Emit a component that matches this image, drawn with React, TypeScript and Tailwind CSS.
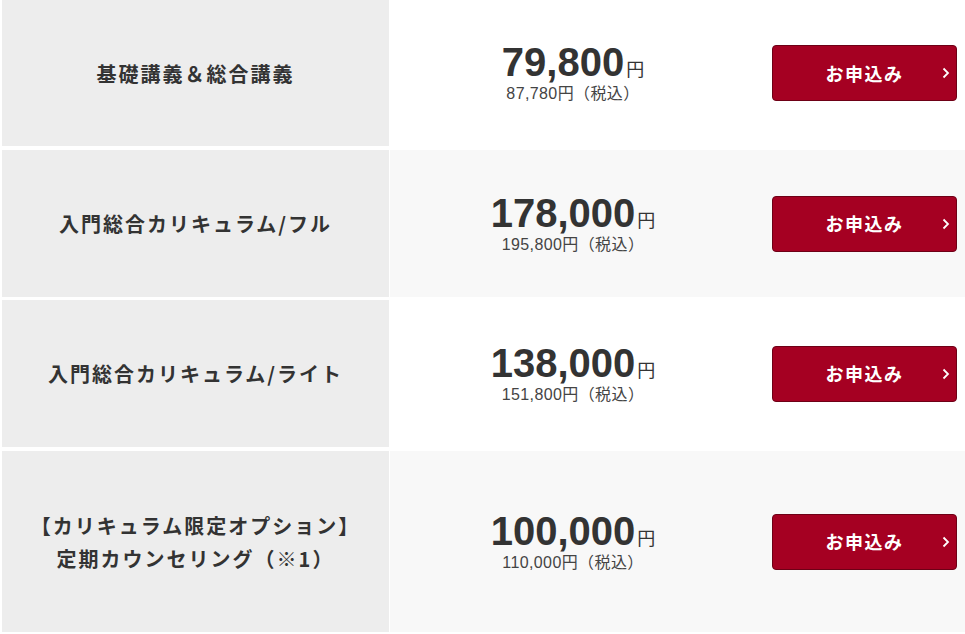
import React from "react";

type Row = {
  label: string[];
  price: string;
  tax: string;
  h: string;
  bg: string;
  mt: string;
};

const rows: Row[] = [
  { label: ["基礎講義＆総合講義"], price: "79,800", tax: "87,780円（税込）", h: "h-[146px]", bg: "bg-white", mt: "mt-0" },
  { label: ["入門総合カリキュラム/フル"], price: "178,000", tax: "195,800円（税込）", h: "h-[147px]", bg: "bg-[#f8f8f8]", mt: "mt-[4px]" },
  { label: ["入門総合カリキュラム/ライト"], price: "138,000", tax: "151,800円（税込）", h: "h-[147px]", bg: "bg-white", mt: "mt-[3px]" },
  { label: ["【カリキュラム限定オプション】", "定期カウンセリング（※1）"], price: "100,000", tax: "110,000円（税込）", h: "h-[181px]", bg: "bg-[#f8f8f8]", mt: "mt-[4px]" },
];

function Chevron() {
  return (
    <svg width="8" height="12" viewBox="0 0 8 12" className="absolute right-[6px] top-1/2 -translate-y-1/2">
      <polyline points="1.5,1.5 6,6 1.5,10.5" fill="none" stroke="white" strokeWidth="1.8" />
    </svg>
  );
}

export default function App() {
  return (
    <div
      className="w-[965px] h-[634px] overflow-hidden bg-white flex flex-col"
      style={{ fontFamily: '"Liberation Sans", "Noto Sans CJK JP", sans-serif' }}
    >
      {rows.map((r, i) => (
        <div key={i} className={`flex ${r.h} ${r.mt} shrink-0`}>
          <div className="ml-[2px] w-[387px] bg-[#ededed] flex flex-col items-center justify-center">
            {r.label.map((l, j) => (
              <div
                key={j}
                className="text-[20px] leading-[33px] font-bold text-[#333] tracking-[2px]"
                style={{ fontFamily: '"Noto Sans CJK JP", sans-serif' }}
              >
                {l}
              </div>
            ))}
          </div>
          <div className={`ml-[1px] flex-1 ${r.bg} flex items-center`}>
            <div className="w-[366px] flex flex-col items-center">
              <div className="flex items-baseline leading-none text-[#333]">
                <span className="text-[40px] font-bold leading-none">{r.price}</span>
                <span className="text-[18px] leading-none ml-[2px]" style={{ fontFamily: '"Noto Sans CJK JP", sans-serif' }}>円</span>
              </div>
              <div className="text-[16px] leading-[20px] text-[#444] mt-[2px] tracking-[0.4px]">{r.tax}</div>
            </div>
            <div className="relative ml-[16px] w-[185px] h-[56px] rounded-[4px] bg-[#a50022] border border-[#6e0016] flex items-center justify-center">
              <span
                className="text-white text-[18px] font-bold tracking-[1.5px]"
                style={{ fontFamily: '"Noto Sans CJK JP", sans-serif' }}
              >
                お申込み
              </span>
              <Chevron />
            </div>
          </div>
        </div>
      ))}
    </div>
  );
}
